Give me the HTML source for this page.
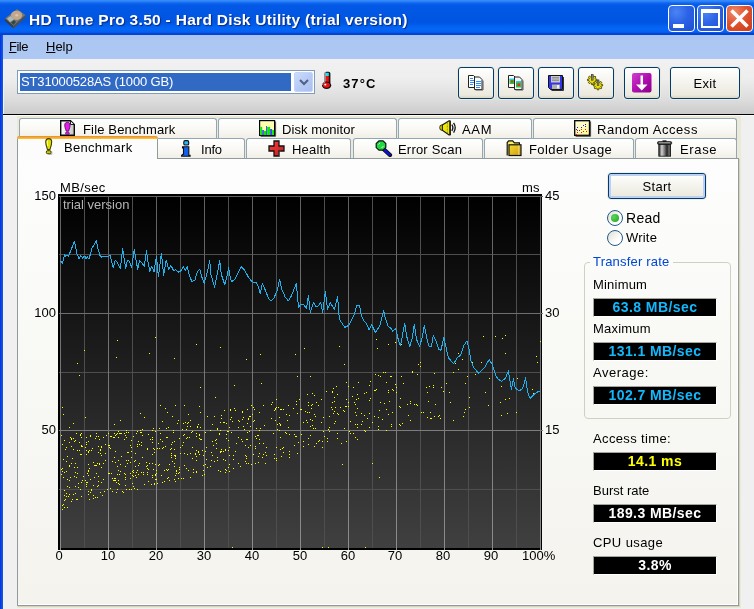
<!DOCTYPE html>
<html><head><meta charset="utf-8"><title>HD Tune Pro 3.50 - Hard Disk Utility (trial version)</title>
<style>
html,body{margin:0;padding:0;}
body{width:754px;height:609px;overflow:hidden;position:relative;background:#f0f0f0;font-family:"Liberation Sans",sans-serif;font-size:13px;color:#000;}
body *{position:absolute;box-sizing:border-box;}
svg *{position:static;}
u{position:static;}
.t{white-space:nowrap;line-height:16px;height:16px;will-change:transform;}
#title{left:0;top:0;width:754px;height:35px;background:linear-gradient(#3a8ffa 0,#2a80f6 1.500px,#0f66f0 3px,#0358e6 5.500px,#0054e2 22px,#0360f0 26px,#0566f6 29px,#0560f0 32px,#0346d6 33.500px,#0240c8 35px);}
#title .cap{will-change:transform;left:29px;top:10px;font-weight:bold;font-size:15.5px;color:#fff;line-height:20px;height:20px;white-space:nowrap;text-shadow:1px 1px 1px #0a2a80;letter-spacing:0.3px;}
.tb{top:5px;width:27px;height:27px;border:1px solid #fff;border-radius:4px;background:radial-gradient(circle at 30% 25%,#4a84f5 0,#2c63e6 45%,#1f4ed0 100%);}
.tb.close{background:radial-gradient(circle at 30% 25%,#f08a6a 0,#e0542f 45%,#c93a1a 100%);}
#lb{left:0;top:35px;width:3px;height:574px;background:linear-gradient(90deg,#0831d9 0,#0a4fe6 60%,#1659ea 100%);}
#lb2{left:3px;top:59px;width:1px;height:550px;background:#f6f3ea;}
#menu{left:3px;top:35px;width:751px;height:24px;background:linear-gradient(#a9c3f0 0,#adc7f3 30%,#aec8f4 100%);}
#menu .t{top:4px;}
#tool{left:4px;top:59px;width:750px;height:55px;background:linear-gradient(#f1f1f1 0,#eeeeee 35%,#dcdcdc 75%,#cbcbcb 100%);}
#toolline{left:3px;top:114px;width:751px;height:1px;background:#000;box-shadow:0 1px 0 #fafafa;}
#combo{left:17px;top:70px;width:298px;height:24px;background:#fff;border:1px solid #7f9db9;}
#combo .sel{left:2px;top:2px;width:271px;height:18px;background:#316ac5;color:#fff;}
#combo .sel .t{left:1px;top:1px;letter-spacing:-0.14px;}
#combo .dd{left:276px;top:1px;width:19px;height:20px;border-radius:2px;background:linear-gradient(135deg,#cddcfb 0,#b8cbf6 50%,#a9bff2 100%);border:1px solid #c3d3fa;}
.btn{border:1px solid #003c74;border-radius:3px;background:linear-gradient(#ffffff 0,#f6f5f0 40%,#eceade 90%,#d9d6c6 100%);box-shadow:0 0 0 1px #ece9d8;}
.btn .t{width:100%;text-align:center;}
.btn svg{left:8px;top:6px;}
.tab{height:22px;border:1px solid #91a7b4;border-bottom:none;border-radius:3px 3px 0 0;background:linear-gradient(#ffffff 0,#f9f8f4 50%,#efede3 100%);}
.tab .t{top:3px;}
#tabbg{left:17px;top:116px;width:724px;height:492px;background:#ece9d8;}
#panel{left:17px;top:158px;width:722px;height:448px;border:1px solid #919b9c;background:linear-gradient(#fdfdfd 0,#f9f9f6 40%,#f4f3ee 100%);box-shadow:inset -1px -1px 0 #fff,1px 1px 0 #d6d2bc;}
#seltab{left:17px;top:136px;width:141px;height:23px;border:1px solid #919b9c;border-bottom:none;border-top:none;border-radius:3px 3px 0 0;background:#fcfcfc;}
#seltab .or{left:-1px;top:0;width:141px;height:3px;background:linear-gradient(#e68b2c,#ffc73c);border-radius:3px 3px 0 0;}
.chart{left:0;top:0;}
.box{left:593px;width:124px;height:19px;background:#000;border-top:1px solid #a5a59a;border-left:1px solid #a5a59a;border-right:1px solid #fff;border-bottom:1px solid #fff;}
.box .t{left:0;top:0px;width:100%;text-align:center;font-weight:bold;font-size:14px;line-height:16px;letter-spacing:0.42px;}
.cy{color:#12b8fc;}.ye{color:#ffff00;}.wh{color:#fff;}
#grp{left:584px;top:262px;width:147px;height:157px;border:1px solid #d0d0bf;border-radius:4px;}
.radio{width:16px;height:16px;border-radius:50%;border:1px solid #21598c;background:linear-gradient(135deg,#dcdcd4 0,#f0f0ea 35%,#fff 70%);}
.xl{top:548px;width:40px;text-align:center;}
</style></head><body>
<div id="title">
  <svg style="left:4px;top:8px" width="24" height="22" viewBox="0 0 24 22"><polygon points="1,10.5 13,1 21.5,7 9.5,18" fill="#77756e"/><polygon points="1,10.5 9.5,18 9.5,20.5 1,13" fill="#3c3c3a"/><polygon points="9.5,18 21.5,7 21.5,9.5 9.5,20.5" fill="#505049"/><ellipse cx="12.6" cy="7.3" rx="5.6" ry="4.6" fill="#c2a78d"/><ellipse cx="12.8" cy="7.2" rx="1.6" ry="1.3" fill="#d8c4b0"/><polygon points="3,10.5 6.5,8 10,11.5 6,14" fill="#aab8b8"/><polygon points="7,14.5 10,12 12,14 9.5,17" fill="#2f4a46"/></svg>
  <div class="cap">HD Tune Pro 3.50 - Hard Disk Utility (trial version)</div>
  <div class="tb" style="left:668px"><div style="left:4px;top:18px;width:11px;height:4px;background:#fff"></div></div>
  <div class="tb" style="left:697px"><div style="left:3px;top:3px;width:19px;height:19px;border:2px solid #fff;border-top-width:4px"></div></div>
  <div class="tb close" style="left:726px"><svg style="left:2px;top:2px" width="21" height="21" viewBox="0 0 21 21"><path d="M2.5 2.5 L18.5 18.5 M18.5 2.5 L2.5 18.5" stroke="#fff" stroke-width="3.6"/></svg></div>
</div>
<div id="lb"></div><div id="lb2"></div>
<div id="menu"><div class="t" style="left:6px;letter-spacing:-0.5px"><u>F</u>ile</div><div class="t" style="left:43px"><u>H</u>elp</div></div>
<div id="tool"></div><div id="toolline"></div>
<div id="combo"><div class="sel"><div class="t">ST31000528AS (1000 GB)</div></div><div class="dd"><svg style="left:4px;top:6px" width="10" height="7" viewBox="0 0 10 7"><path d="M1 1 L5 5 L9 1" fill="none" stroke="#4d6185" stroke-width="2"/></svg></div></div>
<svg style="left:321px;top:71px" width="12" height="19" viewBox="0 0 12 19"><rect x="3.600" y="0.800" width="5.800" height="13" rx="1.800" fill="#111"/><rect x="3.600" y="1.200" width="1.400" height="11" fill="#9a9a9a"/><rect x="4.800" y="1.800" width="3" height="3.200" fill="#20e0f0"/><rect x="4.800" y="5" width="3" height="9" fill="#f01010"/><ellipse cx="5.600" cy="14.300" rx="4.600" ry="3.700" fill="#111"/><path d="M1.200 14 a4.400 3.500 0 0 1 3 -3" stroke="#9a9a9a" stroke-width="1" fill="none"/><ellipse cx="5.400" cy="14.100" rx="3.500" ry="2.700" fill="#f01010"/><rect x="3.400" y="12.800" width="1.800" height="1.600" fill="#fff"/></svg>
<div class="t" style="left:343px;top:76px;font-weight:bold;font-size:13px;letter-spacing:1.1px">37°C</div>

<div class="btn" style="left:458px;top:67px;width:36px;height:32px"><svg width="18" height="18" viewBox="0 0 18 18"><path d="M1.500 1.500 h5 l2 2 v10 h-7z" fill="#fff" stroke="#222" stroke-width="1"/><path d="M3 4.500h3M3 6.500h4M3 8.500h4M3 10.500h3" stroke="#2a8cff" stroke-width="1"/><path d="M7.500 3 h5 l2.500 2.500 v10 h-7.500z" fill="#fff" stroke="#222" stroke-width="1"/><path d="M9 7.500h5M9 9.500h5M9 11.500h5M9 13.500h4" stroke="#2a8cff" stroke-width="1"/><path d="M16 6.500v9.500h-7.500" stroke="#555" fill="none"/></svg></div>
<div class="btn" style="left:498px;top:67px;width:36px;height:32px"><svg width="18" height="18" viewBox="0 0 18 18"><path d="M1.500 1.500 h5 l2 2 v10 h-7z" fill="#fff" stroke="#222"/><rect x="2.500" y="5" width="4.500" height="5" fill="#30c040"/><rect x="2.500" y="4.500" width="4.500" height="1.500" fill="#30c8e8"/><rect x="4" y="6.500" width="2" height="2" fill="#e03020"/><path d="M7.500 3 h5 l2.500 2.500 v10 h-7.500z" fill="#f4f4f4" stroke="#222"/><rect x="9" y="7.500" width="5" height="6" fill="#30c040"/><rect x="9" y="7" width="5" height="1.500" fill="#30c8e8"/><rect x="10.500" y="9.500" width="2.500" height="2.500" fill="#e03020"/><path d="M16 6.500v9.500h-7.500" stroke="#555" fill="none"/></svg></div>
<div class="btn" style="left:538px;top:67px;width:36px;height:32px"><svg width="18" height="18" viewBox="0 0 18 18"><path d="M1.500 1.500 h14 v14 h-12 l-2 -2z" fill="#3434e8" stroke="#111"/><rect x="4" y="2" width="9" height="6.500" fill="#c8c8c8"/><path d="M5 3.500h7M5 5h7M5 6.500h7" stroke="#888" stroke-width="0.800"/><rect x="5" y="10.500" width="8" height="4.500" fill="#b0b0b0"/><rect x="10" y="11" width="2" height="3.500" fill="#eee"/><path d="M16.500 3v13.500h-12" stroke="#333" fill="none"/></svg></div>
<div class="btn" style="left:578px;top:67px;width:36px;height:32px"><svg width="18" height="18" viewBox="0 0 18 18"><path d="M9.83 5.09 L9.83 6.71 L8.41 6.67 L8.01 7.62 L9.05 8.60 L7.90 9.75 L6.92 8.71 L5.97 9.11 L6.01 10.53 L4.39 10.53 L4.43 9.11 L3.48 8.71 L2.50 9.75 L1.35 8.60 L2.39 7.62 L1.99 6.67 L0.57 6.71 L0.57 5.09 L1.99 5.13 L2.39 4.18 L1.35 3.20 L2.50 2.05 L3.48 3.09 L4.43 2.69 L4.39 1.27 L6.01 1.27 L5.97 2.69 L6.92 3.09 L7.90 2.05 L9.05 3.20 L8.01 4.18 L8.41 5.13z" fill="#e8e000" stroke="#4a4500" stroke-width="0.9"/><path d="M15.63 10.39 L15.63 12.01 L14.21 11.97 L13.81 12.92 L14.85 13.90 L13.70 15.05 L12.72 14.01 L11.77 14.41 L11.81 15.83 L10.19 15.83 L10.23 14.41 L9.28 14.01 L8.30 15.05 L7.15 13.90 L8.19 12.92 L7.79 11.97 L6.37 12.01 L6.37 10.39 L7.79 10.43 L8.19 9.48 L7.15 8.50 L8.30 7.35 L9.28 8.39 L10.23 7.99 L10.19 6.57 L11.81 6.57 L11.77 7.99 L12.72 8.39 L13.70 7.35 L14.85 8.50 L13.81 9.48 L14.21 10.43z" fill="#e8e000" stroke="#4a4500" stroke-width="0.9"/><rect x="4.400" y="0.600" width="1.700" height="5.600" fill="#909090" stroke="#303030" stroke-width="0.600"/><rect x="10.200" y="5.900" width="1.700" height="5.600" fill="#909090" stroke="#303030" stroke-width="0.600"/></svg></div>
<div class="btn" style="left:624px;top:67px;width:36px;height:32px"><svg style="left:7px;top:5px" width="20" height="20" viewBox="0 0 20 20"><defs><linearGradient id="pg" x1="0" y1="0" x2="1" y2="1"><stop offset="0" stop-color="#d040d0"/><stop offset="0.500" stop-color="#b010b0"/><stop offset="1" stop-color="#8a008a"/></linearGradient></defs><rect x="0" y="0" width="19.500" height="19.500" rx="2" fill="url(#pg)"/><path d="M8.500 2.500 h2.500 v9 h4.500 l-5.750 6 l-5.750 -6 h4.500z" fill="#fff"/></svg></div>
<div class="btn" style="left:670px;top:67px;width:70px;height:32px"><div class="t" style="top:8px;letter-spacing:0.3px">Exit</div></div>

<div id="tabbg"></div>
<!-- top row tabs -->
<div class="tab" style="left:19px;top:118px;width:198px"><div class="t" style="left:62.500px;letter-spacing:0.15px">File Benchmark</div>
 <svg style="left:40px;top:1px" width="16" height="17" viewBox="0 0 16 17"><defs><linearGradient id="dg" x1="0" y1="0" x2="1" y2="0"><stop offset="0" stop-color="#fff"/><stop offset="1" stop-color="#c4c4c4"/></linearGradient></defs><path d="M0.700 0.700 h9.800 l3.800 3.800 v10.800 h-13.600z" fill="url(#dg)" stroke="#0a0a0a" stroke-width="1.400"/><path d="M10.500 0.700 v3.800 h3.800z" fill="#fff" stroke="#0a0a0a" stroke-width="0.900"/><path d="M7.4 2.3 C10.87 2.3 10.54 6.30 8.5 11.2 L6.300000000000001 11.2 C4.26 6.30 3.93 2.3 7.4 2.3z" fill="#e818e8" stroke="#5a0a60" stroke-width="0.900"/><rect x="5.500" y="12.300" width="3.800" height="2.100" rx="0.900" fill="#e818e8" stroke="#5a0a60" stroke-width="0.700"/></svg></div>
<div class="tab" style="left:218px;top:118px;width:179px"><div class="t" style="left:63px;letter-spacing:0.05px">Disk monitor</div>
 <svg style="left:40px;top:1px" width="18" height="17" viewBox="0 0 18 17"><rect x="0.600" y="0.600" width="15" height="14.800" fill="#ffffb0" stroke="#000" stroke-width="1.200"/><rect x="1.200" y="7" width="2" height="8" fill="#00f000"/><rect x="3.200" y="10" width="1.700" height="5" fill="#4040ff"/><rect x="4.900" y="11" width="2.200" height="4" fill="#00f000"/><rect x="7.100" y="6" width="1" height="9" fill="#4040ff"/><rect x="8.100" y="7" width="3" height="8" fill="#00f000"/><rect x="11.100" y="9" width="2" height="6" fill="#4040ff"/><rect x="13.100" y="10" width="2" height="5" fill="#00f000"/><path d="M16.600 1.500v14.800h-15" stroke="#444" fill="none" stroke-width="1"/></svg></div>
<div class="tab" style="left:398px;top:118px;width:134px"><div class="t" style="left:63px;letter-spacing:0.7px">AAM</div>
 <svg style="left:40px;top:1px" width="18" height="17" viewBox="0 0 18 17"><ellipse cx="2.400" cy="7.600" rx="1.600" ry="2.600" fill="#f0e800" stroke="#111" stroke-width="0.900"/><path d="M3.300 5 L10 0.800 L11 0.800 L11 15 L10 15 L3.300 10.200z" fill="#f0e800" stroke="#111" stroke-width="1.100"/><path d="M11.200 1 V15" stroke="#111" stroke-width="1.200"/><path d="M8.300 2.500v11" stroke="#555" stroke-width="0.600" stroke-dasharray="2 1"/><path d="M12.800 4.600 q2.200 3.100 0 6.200 M14.600 2.800 q3.200 4.900 0 9.800" fill="none" stroke="#111" stroke-width="1.300"/></svg></div>
<div class="tab" style="left:533px;top:118px;width:204px"><div class="t" style="left:62.700px;letter-spacing:0.54px">Random Access</div>
 <svg style="left:40px;top:1px" width="18" height="17" viewBox="0 0 18 17"><defs><linearGradient id="rg" x1="0" y1="0" x2="1" y2="1"><stop offset="0" stop-color="#ffffd8"/><stop offset="1" stop-color="#fff890"/></linearGradient></defs><rect x="0.700" y="0.700" width="14.800" height="14.600" fill="url(#rg)" stroke="#000" stroke-width="1.300"/><g fill="#1818ff"><rect x="3" y="7" width="1" height="1"/><rect x="2" y="9" width="1" height="1"/><rect x="5" y="10" width="1" height="1"/><rect x="7" y="7" width="1" height="1"/><rect x="9" y="5" width="1" height="1"/><rect x="11" y="4" width="1" height="1"/><rect x="11" y="6" width="1" height="1"/></g><g fill="#ff1010"><rect x="3" y="10" width="1" height="1"/><rect x="3" y="12" width="1" height="1"/><rect x="2" y="14" width="1" height="1"/><rect x="7" y="9" width="1" height="1"/><rect x="7" y="12" width="1" height="1"/><rect x="9" y="11" width="1" height="1"/><rect x="11" y="9" width="1" height="1"/><rect x="12" y="11" width="1" height="1"/></g><path d="M16.600 1.500v14.800h-15" stroke="#444" fill="none" stroke-width="1"/></svg></div>
<!-- bottom row tabs -->
<div class="tab" style="left:154px;top:138px;width:91px"><div class="t" style="left:46px;letter-spacing:-0.2px">Info</div>
 <svg style="left:26px;top:1px" width="12" height="17" viewBox="0 0 12 17"><rect x="2.800" y="0.600" width="4.900" height="4.400" rx="1.300" fill="#28b8f8" stroke="#111" stroke-width="1.100"/><path d="M1.500 6.700 h6.300 v8.500 h1.300 v1.100 h-8.500 v-1.100 l1.900 -1.100 v-6.200 h-1z" fill="#1060f0" stroke="#111" stroke-width="1.100"/></svg></div>
<div class="tab" style="left:246px;top:138px;width:105px"><div class="t" style="left:44.500px;letter-spacing:0.2px">Health</div>
 <svg style="left:21px;top:1px" width="18" height="17" viewBox="0 0 18 17"><defs><linearGradient id="hg" x1="0" y1="0" x2="1" y2="1"><stop offset="0" stop-color="#f04040"/><stop offset="1" stop-color="#d01818"/></linearGradient></defs><path d="M6 1 h5 v5 h5 v5 h-5 v5 h-5 v-5 h-5 v-5 h5z" fill="url(#hg)" stroke="#111" stroke-width="1.300"/><path d="M12 7v5h-1v5" stroke="#555" fill="none" stroke-width="0.600"/></svg></div>
<div class="tab" style="left:353px;top:138px;width:130px"><div class="t" style="left:43.500px;letter-spacing:0.2px">Error Scan</div>
 <svg style="left:21px;top:1px" width="18" height="17" viewBox="0 0 18 17"><path d="M9 9.500 L15 15" stroke="#111" stroke-width="4.200" stroke-linecap="round"/><path d="M9.500 10 L14.800 14.800" stroke="#1010d0" stroke-width="2.400" stroke-linecap="round"/><polygon points="4,0.800 8,0.800 10.800,3.600 10.800,7.600 8,10.200 4,10.200 1.200,7.600 1.200,3.600" fill="#20d840" stroke="#111" stroke-width="1.200"/><path d="M3.500 4.500 l1.500 -1.500 M6.500 8 l2 -2" stroke="#d8ffd8" stroke-width="0.900"/></svg></div>
<div class="tab" style="left:484px;top:138px;width:150px"><div class="t" style="left:43.600px;letter-spacing:0.43px">Folder Usage</div>
 <svg style="left:21px;top:1px" width="17" height="17" viewBox="0 0 17 17"><defs><linearGradient id="fg" x1="0" y1="0" x2="1" y2="1"><stop offset="0" stop-color="#f4dc30"/><stop offset="1" stop-color="#d09c10"/></linearGradient></defs><path d="M1.200 15.500 v-13 l1.500 -1.700 h4 l1.700 2 h5 v2" fill="#f8ec60" stroke="#111" stroke-width="1.200"/><rect x="3" y="4.800" width="12" height="10.700" fill="url(#fg)" stroke="#111" stroke-width="1.200"/><path d="M12.700 5.500v9.500" stroke="#e8e0b0" stroke-width="0.700"/></svg></div>
<div class="tab" style="left:635px;top:138px;width:102px"><div class="t" style="left:43.800px;letter-spacing:0.65px">Erase</div>
 <svg style="left:21px;top:1px" width="16" height="17" viewBox="0 0 16 17"><defs><linearGradient id="tg" x1="0" y1="0" x2="1" y2="0"><stop offset="0" stop-color="#222"/><stop offset="0.250" stop-color="#d0d0d0"/><stop offset="0.450" stop-color="#888"/><stop offset="0.700" stop-color="#222"/><stop offset="0.880" stop-color="#777"/><stop offset="1" stop-color="#111"/></linearGradient></defs><rect x="5.500" y="0.300" width="4" height="1.800" fill="#222"/><rect x="1.800" y="4" width="11.800" height="12.200" fill="url(#tg)" stroke="#111" stroke-width="0.800"/><rect x="0.600" y="1.700" width="14" height="2.600" rx="0.800" fill="#555" stroke="#111" stroke-width="0.900"/><rect x="2" y="2.300" width="11" height="0.900" fill="#aaa"/></svg></div>
<div id="panel"></div>
<div id="seltab"><div class="or"></div><div class="t" style="left:46px;top:4px;letter-spacing:0.3px">Benchmark</div>
 <svg style="left:27px;top:2px" width="9" height="17" viewBox="0 0 9 17"><path d="M3.7 0.6 C7.67 0.6 7.28 5.55 4.9 11.6 L2.5 11.6 C0.12 5.55 -0.27 0.6 3.7 0.6z" fill="#dede00" stroke="#3c3c00" stroke-width="1.100"/><path d="M2.600 2.500 q-0.800 2.500 0.300 5.500" stroke="#fafa90" stroke-width="1.100" fill="none"/><rect x="1.300" y="12.700" width="4.800" height="3" rx="1.300" fill="#cccc00" stroke="#3c3c00" stroke-width="1"/><path d="M6.800 13.500 v2.800 h-3.500" stroke="#8a8a7a" stroke-width="0.700" fill="none"/></svg></div>

<svg class="chart" width="754" height="609" viewBox="0 0 754 609">
<defs><linearGradient id="cg" x1="0" y1="0" x2="0" y2="1"><stop offset="0" stop-color="#000"/><stop offset="1" stop-color="#404040"/></linearGradient>
<linearGradient id="mg" gradientUnits="userSpaceOnUse" x1="0" y1="196" x2="0" y2="548"><stop offset="0" stop-color="#606060"/><stop offset="1" stop-color="#8c8c8c"/></linearGradient></defs>
<rect x="58" y="194" width="484" height="356" fill="#000"/>
<rect x="60" y="196" width="481" height="352" fill="url(#cg)"/>
<g fill="#4e4e4e"><rect x="84" y="196" width="1" height="352"/><rect x="132" y="196" width="1" height="352"/><rect x="180" y="196" width="1" height="352"/><rect x="228" y="196" width="1" height="352"/><rect x="276" y="196" width="1" height="352"/><rect x="324" y="196" width="1" height="352"/><rect x="372" y="196" width="1" height="352"/><rect x="420" y="196" width="1" height="352"/><rect x="468" y="196" width="1" height="352"/><rect x="516" y="196" width="1" height="352"/><rect x="59" y="254" width="482" height="1"/><rect x="59" y="372" width="482" height="1"/><rect x="59" y="489" width="482" height="1"/></g>
<g fill="url(#mg)"><rect x="60" y="196" width="1" height="354"/><rect x="108" y="196" width="1" height="354"/><rect x="156" y="196" width="1" height="354"/><rect x="204" y="196" width="1" height="354"/><rect x="252" y="196" width="1" height="354"/><rect x="300" y="196" width="1" height="354"/><rect x="348" y="196" width="1" height="354"/><rect x="396" y="196" width="1" height="354"/><rect x="444" y="196" width="1" height="354"/><rect x="492" y="196" width="1" height="354"/><rect x="540" y="196" width="1" height="354"/></g>
<rect x="59" y="196" width="484" height="1" fill="#606060"/><rect x="59" y="313" width="484" height="1" fill="#6f6f6f"/><rect x="59" y="430" width="484" height="1" fill="#7d7d7d"/>
<g fill="#ffff00" shape-rendering="crispEdges"><rect x="68" y="496" width="1" height="1"/><rect x="62" y="468" width="1" height="1"/><rect x="62" y="471" width="1" height="1"/><rect x="71" y="501" width="1" height="1"/><rect x="71" y="446" width="1" height="1"/><rect x="66" y="461" width="1" height="1"/><rect x="74" y="476" width="1" height="1"/><rect x="62" y="444" width="1" height="1"/><rect x="64" y="500" width="1" height="1"/><rect x="80" y="489" width="1" height="1"/><rect x="76" y="477" width="1" height="1"/><rect x="62" y="505" width="1" height="1"/><rect x="77" y="473" width="1" height="1"/><rect x="75" y="472" width="1" height="1"/><rect x="80" y="454" width="1" height="1"/><rect x="74" y="467" width="1" height="1"/><rect x="78" y="483" width="1" height="1"/><rect x="63" y="477" width="1" height="1"/><rect x="64" y="472" width="1" height="1"/><rect x="77" y="450" width="1" height="1"/><rect x="82" y="480" width="1" height="1"/><rect x="75" y="463" width="1" height="1"/><rect x="81" y="437" width="1" height="1"/><rect x="76" y="499" width="1" height="1"/><rect x="76" y="433" width="1" height="1"/><rect x="67" y="479" width="1" height="1"/><rect x="61" y="474" width="1" height="1"/><rect x="63" y="504" width="1" height="1"/><rect x="64" y="490" width="1" height="1"/><rect x="81" y="496" width="1" height="1"/><rect x="74" y="441" width="1" height="1"/><rect x="81" y="482" width="1" height="1"/><rect x="69" y="442" width="1" height="1"/><rect x="64" y="495" width="1" height="1"/><rect x="66" y="471" width="1" height="1"/><rect x="67" y="507" width="1" height="1"/><rect x="69" y="465" width="1" height="1"/><rect x="77" y="467" width="1" height="1"/><rect x="77" y="499" width="1" height="1"/><rect x="79" y="442" width="1" height="1"/><rect x="70" y="477" width="1" height="1"/><rect x="76" y="499" width="1" height="1"/><rect x="66" y="496" width="1" height="1"/><rect x="62" y="509" width="1" height="1"/><rect x="63" y="414" width="1" height="1"/><rect x="75" y="493" width="1" height="1"/><rect x="69" y="480" width="1" height="1"/><rect x="81" y="433" width="1" height="1"/><rect x="72" y="499" width="1" height="1"/><rect x="69" y="487" width="1" height="1"/><rect x="64" y="507" width="1" height="1"/><rect x="73" y="494" width="1" height="1"/><rect x="61" y="469" width="1" height="1"/><rect x="81" y="454" width="1" height="1"/><rect x="69" y="494" width="1" height="1"/><rect x="73" y="449" width="1" height="1"/><rect x="66" y="447" width="1" height="1"/><rect x="81" y="446" width="1" height="1"/><rect x="78" y="487" width="1" height="1"/><rect x="69" y="427" width="1" height="1"/><rect x="67" y="456" width="1" height="1"/><rect x="71" y="438" width="1" height="1"/><rect x="83" y="476" width="1" height="1"/><rect x="66" y="493" width="1" height="1"/><rect x="75" y="440" width="1" height="1"/><rect x="72" y="458" width="1" height="1"/><rect x="63" y="459" width="1" height="1"/><rect x="79" y="450" width="1" height="1"/><rect x="65" y="449" width="1" height="1"/><rect x="80" y="435" width="1" height="1"/><rect x="70" y="437" width="1" height="1"/><rect x="65" y="499" width="1" height="1"/><rect x="82" y="446" width="1" height="1"/><rect x="80" y="434" width="1" height="1"/><rect x="69" y="466" width="1" height="1"/><rect x="61" y="435" width="1" height="1"/><rect x="73" y="438" width="1" height="1"/><rect x="81" y="445" width="1" height="1"/><rect x="67" y="486" width="1" height="1"/><rect x="75" y="486" width="1" height="1"/><rect x="64" y="440" width="1" height="1"/><rect x="71" y="463" width="1" height="1"/><rect x="71" y="439" width="1" height="1"/><rect x="73" y="423" width="1" height="1"/><rect x="89" y="499" width="1" height="1"/><rect x="89" y="468" width="1" height="1"/><rect x="98" y="476" width="1" height="1"/><rect x="98" y="446" width="1" height="1"/><rect x="98" y="481" width="1" height="1"/><rect x="103" y="463" width="1" height="1"/><rect x="103" y="437" width="1" height="1"/><rect x="99" y="464" width="1" height="1"/><rect x="101" y="467" width="1" height="1"/><rect x="96" y="436" width="1" height="1"/><rect x="106" y="435" width="1" height="1"/><rect x="98" y="436" width="1" height="1"/><rect x="88" y="491" width="1" height="1"/><rect x="86" y="484" width="1" height="1"/><rect x="101" y="446" width="1" height="1"/><rect x="88" y="452" width="1" height="1"/><rect x="88" y="441" width="1" height="1"/><rect x="90" y="436" width="1" height="1"/><rect x="96" y="433" width="1" height="1"/><rect x="88" y="471" width="1" height="1"/><rect x="93" y="485" width="1" height="1"/><rect x="102" y="495" width="1" height="1"/><rect x="95" y="497" width="1" height="1"/><rect x="99" y="464" width="1" height="1"/><rect x="108" y="445" width="1" height="1"/><rect x="87" y="482" width="1" height="1"/><rect x="103" y="479" width="1" height="1"/><rect x="95" y="438" width="1" height="1"/><rect x="91" y="489" width="1" height="1"/><rect x="98" y="452" width="1" height="1"/><rect x="86" y="454" width="1" height="1"/><rect x="86" y="437" width="1" height="1"/><rect x="104" y="491" width="1" height="1"/><rect x="86" y="442" width="1" height="1"/><rect x="93" y="462" width="1" height="1"/><rect x="91" y="490" width="1" height="1"/><rect x="90" y="492" width="1" height="1"/><rect x="86" y="486" width="1" height="1"/><rect x="92" y="448" width="1" height="1"/><rect x="97" y="486" width="1" height="1"/><rect x="85" y="417" width="1" height="1"/><rect x="98" y="485" width="1" height="1"/><rect x="107" y="489" width="1" height="1"/><rect x="95" y="465" width="1" height="1"/><rect x="94" y="465" width="1" height="1"/><rect x="108" y="473" width="1" height="1"/><rect x="101" y="455" width="1" height="1"/><rect x="93" y="495" width="1" height="1"/><rect x="86" y="450" width="1" height="1"/><rect x="88" y="494" width="1" height="1"/><rect x="105" y="453" width="1" height="1"/><rect x="90" y="479" width="1" height="1"/><rect x="88" y="470" width="1" height="1"/><rect x="108" y="433" width="1" height="1"/><rect x="90" y="435" width="1" height="1"/><rect x="93" y="498" width="1" height="1"/><rect x="96" y="465" width="1" height="1"/><rect x="97" y="497" width="1" height="1"/><rect x="87" y="473" width="1" height="1"/><rect x="85" y="480" width="1" height="1"/><rect x="99" y="463" width="1" height="1"/><rect x="100" y="450" width="1" height="1"/><rect x="94" y="477" width="1" height="1"/><rect x="88" y="451" width="1" height="1"/><rect x="86" y="444" width="1" height="1"/><rect x="100" y="449" width="1" height="1"/><rect x="88" y="464" width="1" height="1"/><rect x="105" y="444" width="1" height="1"/><rect x="99" y="439" width="1" height="1"/><rect x="101" y="482" width="1" height="1"/><rect x="88" y="475" width="1" height="1"/><rect x="105" y="460" width="1" height="1"/><rect x="100" y="453" width="1" height="1"/><rect x="85" y="447" width="1" height="1"/><rect x="97" y="463" width="1" height="1"/><rect x="86" y="450" width="1" height="1"/><rect x="86" y="482" width="1" height="1"/><rect x="89" y="450" width="1" height="1"/><rect x="96" y="473" width="1" height="1"/><rect x="101" y="447" width="1" height="1"/><rect x="100" y="492" width="1" height="1"/><rect x="91" y="450" width="1" height="1"/><rect x="122" y="491" width="1" height="1"/><rect x="115" y="451" width="1" height="1"/><rect x="125" y="474" width="1" height="1"/><rect x="120" y="464" width="1" height="1"/><rect x="130" y="478" width="1" height="1"/><rect x="131" y="489" width="1" height="1"/><rect x="128" y="432" width="1" height="1"/><rect x="115" y="480" width="1" height="1"/><rect x="114" y="457" width="1" height="1"/><rect x="121" y="433" width="1" height="1"/><rect x="128" y="460" width="1" height="1"/><rect x="125" y="477" width="1" height="1"/><rect x="120" y="420" width="1" height="1"/><rect x="119" y="474" width="1" height="1"/><rect x="117" y="474" width="1" height="1"/><rect x="109" y="447" width="1" height="1"/><rect x="111" y="436" width="1" height="1"/><rect x="130" y="473" width="1" height="1"/><rect x="118" y="431" width="1" height="1"/><rect x="117" y="466" width="1" height="1"/><rect x="110" y="488" width="1" height="1"/><rect x="115" y="435" width="1" height="1"/><rect x="115" y="462" width="1" height="1"/><rect x="117" y="433" width="1" height="1"/><rect x="128" y="452" width="1" height="1"/><rect x="131" y="457" width="1" height="1"/><rect x="110" y="448" width="1" height="1"/><rect x="127" y="452" width="1" height="1"/><rect x="110" y="436" width="1" height="1"/><rect x="120" y="471" width="1" height="1"/><rect x="126" y="432" width="1" height="1"/><rect x="124" y="473" width="1" height="1"/><rect x="118" y="483" width="1" height="1"/><rect x="113" y="437" width="1" height="1"/><rect x="114" y="437" width="1" height="1"/><rect x="119" y="484" width="1" height="1"/><rect x="111" y="473" width="1" height="1"/><rect x="114" y="478" width="1" height="1"/><rect x="130" y="445" width="1" height="1"/><rect x="118" y="460" width="1" height="1"/><rect x="117" y="489" width="1" height="1"/><rect x="132" y="483" width="1" height="1"/><rect x="124" y="439" width="1" height="1"/><rect x="115" y="478" width="1" height="1"/><rect x="119" y="433" width="1" height="1"/><rect x="129" y="489" width="1" height="1"/><rect x="126" y="437" width="1" height="1"/><rect x="123" y="492" width="1" height="1"/><rect x="131" y="440" width="1" height="1"/><rect x="132" y="475" width="1" height="1"/><rect x="112" y="461" width="1" height="1"/><rect x="131" y="447" width="1" height="1"/><rect x="127" y="463" width="1" height="1"/><rect x="109" y="445" width="1" height="1"/><rect x="131" y="451" width="1" height="1"/><rect x="112" y="478" width="1" height="1"/><rect x="125" y="485" width="1" height="1"/><rect x="121" y="456" width="1" height="1"/><rect x="114" y="424" width="1" height="1"/><rect x="120" y="433" width="1" height="1"/><rect x="130" y="462" width="1" height="1"/><rect x="114" y="433" width="1" height="1"/><rect x="116" y="492" width="1" height="1"/><rect x="125" y="466" width="1" height="1"/><rect x="125" y="435" width="1" height="1"/><rect x="109" y="473" width="1" height="1"/><rect x="125" y="479" width="1" height="1"/><rect x="126" y="460" width="1" height="1"/><rect x="132" y="471" width="1" height="1"/><rect x="114" y="480" width="1" height="1"/><rect x="116" y="434" width="1" height="1"/><rect x="113" y="480" width="1" height="1"/><rect x="124" y="433" width="1" height="1"/><rect x="118" y="480" width="1" height="1"/><rect x="112" y="491" width="1" height="1"/><rect x="118" y="437" width="1" height="1"/><rect x="126" y="430" width="1" height="1"/><rect x="116" y="482" width="1" height="1"/><rect x="126" y="489" width="1" height="1"/><rect x="118" y="470" width="1" height="1"/><rect x="137" y="489" width="1" height="1"/><rect x="141" y="432" width="1" height="1"/><rect x="156" y="473" width="1" height="1"/><rect x="152" y="439" width="1" height="1"/><rect x="134" y="461" width="1" height="1"/><rect x="155" y="474" width="1" height="1"/><rect x="154" y="484" width="1" height="1"/><rect x="152" y="442" width="1" height="1"/><rect x="133" y="486" width="1" height="1"/><rect x="139" y="444" width="1" height="1"/><rect x="141" y="472" width="1" height="1"/><rect x="147" y="472" width="1" height="1"/><rect x="140" y="413" width="1" height="1"/><rect x="154" y="449" width="1" height="1"/><rect x="133" y="476" width="1" height="1"/><rect x="155" y="431" width="1" height="1"/><rect x="139" y="463" width="1" height="1"/><rect x="155" y="475" width="1" height="1"/><rect x="150" y="439" width="1" height="1"/><rect x="147" y="468" width="1" height="1"/><rect x="141" y="442" width="1" height="1"/><rect x="137" y="444" width="1" height="1"/><rect x="134" y="488" width="1" height="1"/><rect x="140" y="430" width="1" height="1"/><rect x="156" y="470" width="1" height="1"/><rect x="135" y="460" width="1" height="1"/><rect x="143" y="474" width="1" height="1"/><rect x="147" y="448" width="1" height="1"/><rect x="153" y="448" width="1" height="1"/><rect x="153" y="469" width="1" height="1"/><rect x="141" y="445" width="1" height="1"/><rect x="138" y="474" width="1" height="1"/><rect x="154" y="452" width="1" height="1"/><rect x="142" y="429" width="1" height="1"/><rect x="138" y="441" width="1" height="1"/><rect x="156" y="479" width="1" height="1"/><rect x="152" y="437" width="1" height="1"/><rect x="133" y="472" width="1" height="1"/><rect x="137" y="431" width="1" height="1"/><rect x="155" y="464" width="1" height="1"/><rect x="143" y="472" width="1" height="1"/><rect x="155" y="479" width="1" height="1"/><rect x="147" y="474" width="1" height="1"/><rect x="136" y="477" width="1" height="1"/><rect x="147" y="449" width="1" height="1"/><rect x="133" y="470" width="1" height="1"/><rect x="137" y="470" width="1" height="1"/><rect x="152" y="454" width="1" height="1"/><rect x="135" y="466" width="1" height="1"/><rect x="148" y="481" width="1" height="1"/><rect x="149" y="463" width="1" height="1"/><rect x="140" y="432" width="1" height="1"/><rect x="146" y="466" width="1" height="1"/><rect x="153" y="428" width="1" height="1"/><rect x="137" y="446" width="1" height="1"/><rect x="133" y="436" width="1" height="1"/><rect x="152" y="463" width="1" height="1"/><rect x="144" y="417" width="1" height="1"/><rect x="148" y="434" width="1" height="1"/><rect x="147" y="465" width="1" height="1"/><rect x="136" y="472" width="1" height="1"/><rect x="155" y="479" width="1" height="1"/><rect x="152" y="430" width="1" height="1"/><rect x="136" y="433" width="1" height="1"/><rect x="144" y="484" width="1" height="1"/><rect x="142" y="435" width="1" height="1"/><rect x="152" y="477" width="1" height="1"/><rect x="138" y="465" width="1" height="1"/><rect x="152" y="475" width="1" height="1"/><rect x="142" y="457" width="1" height="1"/><rect x="135" y="475" width="1" height="1"/><rect x="154" y="483" width="1" height="1"/><rect x="151" y="484" width="1" height="1"/><rect x="135" y="453" width="1" height="1"/><rect x="148" y="469" width="1" height="1"/><rect x="146" y="462" width="1" height="1"/><rect x="167" y="412" width="1" height="1"/><rect x="168" y="469" width="1" height="1"/><rect x="175" y="455" width="1" height="1"/><rect x="168" y="477" width="1" height="1"/><rect x="167" y="478" width="1" height="1"/><rect x="169" y="480" width="1" height="1"/><rect x="158" y="443" width="1" height="1"/><rect x="169" y="480" width="1" height="1"/><rect x="166" y="428" width="1" height="1"/><rect x="177" y="423" width="1" height="1"/><rect x="176" y="470" width="1" height="1"/><rect x="168" y="427" width="1" height="1"/><rect x="160" y="439" width="1" height="1"/><rect x="158" y="465" width="1" height="1"/><rect x="160" y="433" width="1" height="1"/><rect x="176" y="473" width="1" height="1"/><rect x="179" y="469" width="1" height="1"/><rect x="169" y="464" width="1" height="1"/><rect x="161" y="475" width="1" height="1"/><rect x="173" y="430" width="1" height="1"/><rect x="175" y="475" width="1" height="1"/><rect x="172" y="461" width="1" height="1"/><rect x="170" y="449" width="1" height="1"/><rect x="159" y="428" width="1" height="1"/><rect x="166" y="437" width="1" height="1"/><rect x="180" y="447" width="1" height="1"/><rect x="175" y="456" width="1" height="1"/><rect x="174" y="479" width="1" height="1"/><rect x="163" y="447" width="1" height="1"/><rect x="171" y="444" width="1" height="1"/><rect x="157" y="483" width="1" height="1"/><rect x="171" y="457" width="1" height="1"/><rect x="178" y="473" width="1" height="1"/><rect x="172" y="416" width="1" height="1"/><rect x="159" y="464" width="1" height="1"/><rect x="171" y="448" width="1" height="1"/><rect x="171" y="455" width="1" height="1"/><rect x="179" y="467" width="1" height="1"/><rect x="159" y="448" width="1" height="1"/><rect x="175" y="458" width="1" height="1"/><rect x="157" y="448" width="1" height="1"/><rect x="165" y="446" width="1" height="1"/><rect x="179" y="438" width="1" height="1"/><rect x="178" y="478" width="1" height="1"/><rect x="166" y="469" width="1" height="1"/><rect x="175" y="481" width="1" height="1"/><rect x="179" y="472" width="1" height="1"/><rect x="171" y="453" width="1" height="1"/><rect x="176" y="471" width="1" height="1"/><rect x="164" y="481" width="1" height="1"/><rect x="175" y="405" width="1" height="1"/><rect x="174" y="455" width="1" height="1"/><rect x="167" y="470" width="1" height="1"/><rect x="162" y="482" width="1" height="1"/><rect x="174" y="441" width="1" height="1"/><rect x="174" y="466" width="1" height="1"/><rect x="167" y="437" width="1" height="1"/><rect x="163" y="447" width="1" height="1"/><rect x="162" y="421" width="1" height="1"/><rect x="162" y="441" width="1" height="1"/><rect x="174" y="463" width="1" height="1"/><rect x="164" y="470" width="1" height="1"/><rect x="172" y="442" width="1" height="1"/><rect x="180" y="453" width="1" height="1"/><rect x="173" y="432" width="1" height="1"/><rect x="174" y="449" width="1" height="1"/><rect x="162" y="448" width="1" height="1"/><rect x="178" y="420" width="1" height="1"/><rect x="203" y="455" width="1" height="1"/><rect x="181" y="478" width="1" height="1"/><rect x="196" y="436" width="1" height="1"/><rect x="182" y="445" width="1" height="1"/><rect x="200" y="427" width="1" height="1"/><rect x="182" y="429" width="1" height="1"/><rect x="203" y="470" width="1" height="1"/><rect x="183" y="478" width="1" height="1"/><rect x="200" y="439" width="1" height="1"/><rect x="196" y="460" width="1" height="1"/><rect x="183" y="435" width="1" height="1"/><rect x="188" y="414" width="1" height="1"/><rect x="187" y="437" width="1" height="1"/><rect x="188" y="422" width="1" height="1"/><rect x="201" y="439" width="1" height="1"/><rect x="190" y="453" width="1" height="1"/><rect x="189" y="437" width="1" height="1"/><rect x="186" y="429" width="1" height="1"/><rect x="200" y="412" width="1" height="1"/><rect x="199" y="406" width="1" height="1"/><rect x="192" y="431" width="1" height="1"/><rect x="192" y="458" width="1" height="1"/><rect x="187" y="423" width="1" height="1"/><rect x="186" y="438" width="1" height="1"/><rect x="183" y="442" width="1" height="1"/><rect x="199" y="435" width="1" height="1"/><rect x="196" y="456" width="1" height="1"/><rect x="190" y="426" width="1" height="1"/><rect x="202" y="475" width="1" height="1"/><rect x="187" y="426" width="1" height="1"/><rect x="190" y="426" width="1" height="1"/><rect x="192" y="447" width="1" height="1"/><rect x="199" y="438" width="1" height="1"/><rect x="188" y="470" width="1" height="1"/><rect x="196" y="433" width="1" height="1"/><rect x="191" y="432" width="1" height="1"/><rect x="184" y="453" width="1" height="1"/><rect x="186" y="468" width="1" height="1"/><rect x="197" y="427" width="1" height="1"/><rect x="184" y="465" width="1" height="1"/><rect x="193" y="469" width="1" height="1"/><rect x="185" y="422" width="1" height="1"/><rect x="183" y="423" width="1" height="1"/><rect x="190" y="420" width="1" height="1"/><rect x="198" y="451" width="1" height="1"/><rect x="196" y="471" width="1" height="1"/><rect x="190" y="477" width="1" height="1"/><rect x="199" y="435" width="1" height="1"/><rect x="196" y="450" width="1" height="1"/><rect x="195" y="454" width="1" height="1"/><rect x="202" y="450" width="1" height="1"/><rect x="198" y="452" width="1" height="1"/><rect x="198" y="424" width="1" height="1"/><rect x="197" y="426" width="1" height="1"/><rect x="196" y="450" width="1" height="1"/><rect x="196" y="472" width="1" height="1"/><rect x="199" y="434" width="1" height="1"/><rect x="187" y="454" width="1" height="1"/><rect x="195" y="453" width="1" height="1"/><rect x="203" y="465" width="1" height="1"/><rect x="199" y="454" width="1" height="1"/><rect x="204" y="474" width="1" height="1"/><rect x="184" y="434" width="1" height="1"/><rect x="193" y="472" width="1" height="1"/><rect x="217" y="429" width="1" height="1"/><rect x="220" y="422" width="1" height="1"/><rect x="214" y="416" width="1" height="1"/><rect x="221" y="449" width="1" height="1"/><rect x="207" y="416" width="1" height="1"/><rect x="206" y="459" width="1" height="1"/><rect x="205" y="451" width="1" height="1"/><rect x="221" y="451" width="1" height="1"/><rect x="210" y="430" width="1" height="1"/><rect x="217" y="460" width="1" height="1"/><rect x="214" y="461" width="1" height="1"/><rect x="223" y="422" width="1" height="1"/><rect x="216" y="439" width="1" height="1"/><rect x="228" y="450" width="1" height="1"/><rect x="224" y="422" width="1" height="1"/><rect x="212" y="441" width="1" height="1"/><rect x="225" y="450" width="1" height="1"/><rect x="211" y="452" width="1" height="1"/><rect x="215" y="397" width="1" height="1"/><rect x="211" y="460" width="1" height="1"/><rect x="216" y="448" width="1" height="1"/><rect x="220" y="451" width="1" height="1"/><rect x="225" y="469" width="1" height="1"/><rect x="226" y="423" width="1" height="1"/><rect x="224" y="410" width="1" height="1"/><rect x="227" y="431" width="1" height="1"/><rect x="207" y="467" width="1" height="1"/><rect x="223" y="451" width="1" height="1"/><rect x="226" y="423" width="1" height="1"/><rect x="226" y="434" width="1" height="1"/><rect x="221" y="418" width="1" height="1"/><rect x="225" y="460" width="1" height="1"/><rect x="217" y="428" width="1" height="1"/><rect x="226" y="438" width="1" height="1"/><rect x="210" y="466" width="1" height="1"/><rect x="206" y="447" width="1" height="1"/><rect x="216" y="443" width="1" height="1"/><rect x="225" y="472" width="1" height="1"/><rect x="216" y="439" width="1" height="1"/><rect x="225" y="449" width="1" height="1"/><rect x="228" y="467" width="1" height="1"/><rect x="220" y="471" width="1" height="1"/><rect x="221" y="415" width="1" height="1"/><rect x="228" y="440" width="1" height="1"/><rect x="226" y="470" width="1" height="1"/><rect x="220" y="452" width="1" height="1"/><rect x="213" y="445" width="1" height="1"/><rect x="223" y="459" width="1" height="1"/><rect x="215" y="440" width="1" height="1"/><rect x="212" y="424" width="1" height="1"/><rect x="217" y="457" width="1" height="1"/><rect x="228" y="431" width="1" height="1"/><rect x="212" y="455" width="1" height="1"/><rect x="219" y="434" width="1" height="1"/><rect x="205" y="432" width="1" height="1"/><rect x="218" y="470" width="1" height="1"/><rect x="205" y="464" width="1" height="1"/><rect x="219" y="433" width="1" height="1"/><rect x="226" y="434" width="1" height="1"/><rect x="220" y="430" width="1" height="1"/><rect x="245" y="455" width="1" height="1"/><rect x="239" y="421" width="1" height="1"/><rect x="233" y="468" width="1" height="1"/><rect x="250" y="426" width="1" height="1"/><rect x="248" y="418" width="1" height="1"/><rect x="235" y="451" width="1" height="1"/><rect x="236" y="443" width="1" height="1"/><rect x="251" y="464" width="1" height="1"/><rect x="229" y="464" width="1" height="1"/><rect x="242" y="411" width="1" height="1"/><rect x="229" y="447" width="1" height="1"/><rect x="251" y="405" width="1" height="1"/><rect x="238" y="463" width="1" height="1"/><rect x="234" y="408" width="1" height="1"/><rect x="245" y="461" width="1" height="1"/><rect x="231" y="417" width="1" height="1"/><rect x="229" y="427" width="1" height="1"/><rect x="246" y="456" width="1" height="1"/><rect x="247" y="423" width="1" height="1"/><rect x="246" y="463" width="1" height="1"/><rect x="246" y="439" width="1" height="1"/><rect x="235" y="410" width="1" height="1"/><rect x="229" y="471" width="1" height="1"/><rect x="248" y="463" width="1" height="1"/><rect x="246" y="458" width="1" height="1"/><rect x="240" y="466" width="1" height="1"/><rect x="242" y="441" width="1" height="1"/><rect x="232" y="421" width="1" height="1"/><rect x="244" y="429" width="1" height="1"/><rect x="238" y="420" width="1" height="1"/><rect x="247" y="432" width="1" height="1"/><rect x="230" y="410" width="1" height="1"/><rect x="248" y="447" width="1" height="1"/><rect x="252" y="414" width="1" height="1"/><rect x="236" y="443" width="1" height="1"/><rect x="238" y="427" width="1" height="1"/><rect x="250" y="416" width="1" height="1"/><rect x="229" y="455" width="1" height="1"/><rect x="243" y="417" width="1" height="1"/><rect x="230" y="419" width="1" height="1"/><rect x="249" y="431" width="1" height="1"/><rect x="249" y="416" width="1" height="1"/><rect x="250" y="445" width="1" height="1"/><rect x="242" y="419" width="1" height="1"/><rect x="247" y="409" width="1" height="1"/><rect x="243" y="426" width="1" height="1"/><rect x="233" y="455" width="1" height="1"/><rect x="247" y="439" width="1" height="1"/><rect x="248" y="419" width="1" height="1"/><rect x="242" y="412" width="1" height="1"/><rect x="241" y="439" width="1" height="1"/><rect x="233" y="459" width="1" height="1"/><rect x="245" y="445" width="1" height="1"/><rect x="238" y="437" width="1" height="1"/><rect x="230" y="409" width="1" height="1"/><rect x="231" y="432" width="1" height="1"/><rect x="256" y="428" width="1" height="1"/><rect x="265" y="463" width="1" height="1"/><rect x="276" y="407" width="1" height="1"/><rect x="266" y="447" width="1" height="1"/><rect x="263" y="405" width="1" height="1"/><rect x="272" y="402" width="1" height="1"/><rect x="253" y="454" width="1" height="1"/><rect x="255" y="463" width="1" height="1"/><rect x="273" y="433" width="1" height="1"/><rect x="274" y="458" width="1" height="1"/><rect x="262" y="457" width="1" height="1"/><rect x="259" y="430" width="1" height="1"/><rect x="275" y="420" width="1" height="1"/><rect x="263" y="454" width="1" height="1"/><rect x="276" y="447" width="1" height="1"/><rect x="259" y="443" width="1" height="1"/><rect x="274" y="410" width="1" height="1"/><rect x="271" y="418" width="1" height="1"/><rect x="276" y="458" width="1" height="1"/><rect x="271" y="404" width="1" height="1"/><rect x="260" y="428" width="1" height="1"/><rect x="255" y="446" width="1" height="1"/><rect x="255" y="436" width="1" height="1"/><rect x="258" y="456" width="1" height="1"/><rect x="253" y="421" width="1" height="1"/><rect x="253" y="407" width="1" height="1"/><rect x="275" y="408" width="1" height="1"/><rect x="256" y="438" width="1" height="1"/><rect x="275" y="409" width="1" height="1"/><rect x="263" y="443" width="1" height="1"/><rect x="264" y="425" width="1" height="1"/><rect x="258" y="462" width="1" height="1"/><rect x="266" y="455" width="1" height="1"/><rect x="259" y="439" width="1" height="1"/><rect x="259" y="412" width="1" height="1"/><rect x="257" y="435" width="1" height="1"/><rect x="274" y="454" width="1" height="1"/><rect x="254" y="409" width="1" height="1"/><rect x="258" y="435" width="1" height="1"/><rect x="259" y="453" width="1" height="1"/><rect x="276" y="399" width="1" height="1"/><rect x="255" y="448" width="1" height="1"/><rect x="254" y="420" width="1" height="1"/><rect x="276" y="460" width="1" height="1"/><rect x="261" y="383" width="1" height="1"/><rect x="265" y="452" width="1" height="1"/><rect x="298" y="442" width="1" height="1"/><rect x="280" y="449" width="1" height="1"/><rect x="294" y="445" width="1" height="1"/><rect x="279" y="423" width="1" height="1"/><rect x="283" y="447" width="1" height="1"/><rect x="293" y="408" width="1" height="1"/><rect x="281" y="456" width="1" height="1"/><rect x="286" y="414" width="1" height="1"/><rect x="296" y="436" width="1" height="1"/><rect x="297" y="376" width="1" height="1"/><rect x="288" y="405" width="1" height="1"/><rect x="281" y="409" width="1" height="1"/><rect x="280" y="437" width="1" height="1"/><rect x="277" y="429" width="1" height="1"/><rect x="289" y="451" width="1" height="1"/><rect x="296" y="404" width="1" height="1"/><rect x="294" y="434" width="1" height="1"/><rect x="278" y="407" width="1" height="1"/><rect x="288" y="427" width="1" height="1"/><rect x="289" y="457" width="1" height="1"/><rect x="282" y="448" width="1" height="1"/><rect x="283" y="409" width="1" height="1"/><rect x="279" y="417" width="1" height="1"/><rect x="277" y="424" width="1" height="1"/><rect x="289" y="415" width="1" height="1"/><rect x="297" y="413" width="1" height="1"/><rect x="279" y="430" width="1" height="1"/><rect x="283" y="452" width="1" height="1"/><rect x="280" y="424" width="1" height="1"/><rect x="280" y="425" width="1" height="1"/><rect x="280" y="409" width="1" height="1"/><rect x="286" y="433" width="1" height="1"/><rect x="289" y="434" width="1" height="1"/><rect x="295" y="436" width="1" height="1"/><rect x="285" y="432" width="1" height="1"/><rect x="296" y="401" width="1" height="1"/><rect x="297" y="453" width="1" height="1"/><rect x="299" y="399" width="1" height="1"/><rect x="287" y="420" width="1" height="1"/><rect x="289" y="454" width="1" height="1"/><rect x="289" y="457" width="1" height="1"/><rect x="300" y="409" width="1" height="1"/><rect x="316" y="402" width="1" height="1"/><rect x="322" y="447" width="1" height="1"/><rect x="307" y="412" width="1" height="1"/><rect x="314" y="395" width="1" height="1"/><rect x="307" y="422" width="1" height="1"/><rect x="323" y="431" width="1" height="1"/><rect x="316" y="443" width="1" height="1"/><rect x="323" y="417" width="1" height="1"/><rect x="312" y="420" width="1" height="1"/><rect x="303" y="446" width="1" height="1"/><rect x="310" y="435" width="1" height="1"/><rect x="303" y="422" width="1" height="1"/><rect x="315" y="416" width="1" height="1"/><rect x="305" y="411" width="1" height="1"/><rect x="314" y="414" width="1" height="1"/><rect x="308" y="438" width="1" height="1"/><rect x="313" y="428" width="1" height="1"/><rect x="301" y="434" width="1" height="1"/><rect x="306" y="420" width="1" height="1"/><rect x="307" y="394" width="1" height="1"/><rect x="319" y="440" width="1" height="1"/><rect x="321" y="422" width="1" height="1"/><rect x="310" y="426" width="1" height="1"/><rect x="303" y="441" width="1" height="1"/><rect x="318" y="441" width="1" height="1"/><rect x="309" y="412" width="1" height="1"/><rect x="321" y="399" width="1" height="1"/><rect x="318" y="405" width="1" height="1"/><rect x="312" y="404" width="1" height="1"/><rect x="322" y="441" width="1" height="1"/><rect x="301" y="409" width="1" height="1"/><rect x="312" y="393" width="1" height="1"/><rect x="311" y="405" width="1" height="1"/><rect x="315" y="428" width="1" height="1"/><rect x="311" y="408" width="1" height="1"/><rect x="310" y="419" width="1" height="1"/><rect x="308" y="405" width="1" height="1"/><rect x="312" y="425" width="1" height="1"/><rect x="308" y="444" width="1" height="1"/><rect x="314" y="446" width="1" height="1"/><rect x="308" y="402" width="1" height="1"/><rect x="324" y="436" width="1" height="1"/><rect x="346" y="441" width="1" height="1"/><rect x="338" y="414" width="1" height="1"/><rect x="343" y="410" width="1" height="1"/><rect x="337" y="413" width="1" height="1"/><rect x="334" y="423" width="1" height="1"/><rect x="333" y="388" width="1" height="1"/><rect x="337" y="438" width="1" height="1"/><rect x="334" y="411" width="1" height="1"/><rect x="346" y="382" width="1" height="1"/><rect x="335" y="407" width="1" height="1"/><rect x="333" y="413" width="1" height="1"/><rect x="329" y="427" width="1" height="1"/><rect x="344" y="411" width="1" height="1"/><rect x="346" y="399" width="1" height="1"/><rect x="348" y="386" width="1" height="1"/><rect x="328" y="429" width="1" height="1"/><rect x="337" y="433" width="1" height="1"/><rect x="340" y="407" width="1" height="1"/><rect x="348" y="402" width="1" height="1"/><rect x="334" y="397" width="1" height="1"/><rect x="341" y="443" width="1" height="1"/><rect x="345" y="406" width="1" height="1"/><rect x="329" y="416" width="1" height="1"/><rect x="331" y="407" width="1" height="1"/><rect x="348" y="406" width="1" height="1"/><rect x="327" y="438" width="1" height="1"/><rect x="327" y="441" width="1" height="1"/><rect x="337" y="394" width="1" height="1"/><rect x="344" y="364" width="1" height="1"/><rect x="332" y="402" width="1" height="1"/><rect x="329" y="431" width="1" height="1"/><rect x="346" y="406" width="1" height="1"/><rect x="335" y="421" width="1" height="1"/><rect x="346" y="406" width="1" height="1"/><rect x="335" y="407" width="1" height="1"/><rect x="326" y="391" width="1" height="1"/><rect x="332" y="391" width="1" height="1"/><rect x="332" y="409" width="1" height="1"/><rect x="336" y="386" width="1" height="1"/><rect x="334" y="401" width="1" height="1"/><rect x="332" y="392" width="1" height="1"/><rect x="344" y="428" width="1" height="1"/><rect x="357" y="427" width="1" height="1"/><rect x="355" y="404" width="1" height="1"/><rect x="361" y="413" width="1" height="1"/><rect x="350" y="433" width="1" height="1"/><rect x="357" y="424" width="1" height="1"/><rect x="355" y="424" width="1" height="1"/><rect x="364" y="415" width="1" height="1"/><rect x="365" y="431" width="1" height="1"/><rect x="369" y="427" width="1" height="1"/><rect x="369" y="385" width="1" height="1"/><rect x="357" y="394" width="1" height="1"/><rect x="372" y="422" width="1" height="1"/><rect x="361" y="424" width="1" height="1"/><rect x="352" y="396" width="1" height="1"/><rect x="370" y="398" width="1" height="1"/><rect x="354" y="402" width="1" height="1"/><rect x="369" y="427" width="1" height="1"/><rect x="362" y="421" width="1" height="1"/><rect x="358" y="398" width="1" height="1"/><rect x="356" y="415" width="1" height="1"/><rect x="353" y="387" width="1" height="1"/><rect x="364" y="430" width="1" height="1"/><rect x="357" y="408" width="1" height="1"/><rect x="350" y="421" width="1" height="1"/><rect x="352" y="396" width="1" height="1"/><rect x="358" y="382" width="1" height="1"/><rect x="370" y="381" width="1" height="1"/><rect x="355" y="437" width="1" height="1"/><rect x="364" y="415" width="1" height="1"/><rect x="364" y="393" width="1" height="1"/><rect x="369" y="413" width="1" height="1"/><rect x="353" y="433" width="1" height="1"/><rect x="366" y="392" width="1" height="1"/><rect x="349" y="431" width="1" height="1"/><rect x="356" y="415" width="1" height="1"/><rect x="356" y="399" width="1" height="1"/><rect x="369" y="400" width="1" height="1"/><rect x="355" y="412" width="1" height="1"/><rect x="357" y="439" width="1" height="1"/><rect x="367" y="418" width="1" height="1"/><rect x="393" y="390" width="1" height="1"/><rect x="378" y="426" width="1" height="1"/><rect x="378" y="375" width="1" height="1"/><rect x="375" y="390" width="1" height="1"/><rect x="390" y="376" width="1" height="1"/><rect x="375" y="374" width="1" height="1"/><rect x="395" y="384" width="1" height="1"/><rect x="392" y="389" width="1" height="1"/><rect x="374" y="390" width="1" height="1"/><rect x="385" y="372" width="1" height="1"/><rect x="391" y="426" width="1" height="1"/><rect x="392" y="412" width="1" height="1"/><rect x="396" y="387" width="1" height="1"/><rect x="378" y="429" width="1" height="1"/><rect x="382" y="419" width="1" height="1"/><rect x="376" y="389" width="1" height="1"/><rect x="378" y="417" width="1" height="1"/><rect x="383" y="372" width="1" height="1"/><rect x="380" y="376" width="1" height="1"/><rect x="386" y="409" width="1" height="1"/><rect x="386" y="382" width="1" height="1"/><rect x="388" y="392" width="1" height="1"/><rect x="391" y="376" width="1" height="1"/><rect x="379" y="410" width="1" height="1"/><rect x="374" y="416" width="1" height="1"/><rect x="389" y="401" width="1" height="1"/><rect x="380" y="402" width="1" height="1"/><rect x="377" y="348" width="1" height="1"/><rect x="391" y="424" width="1" height="1"/><rect x="396" y="392" width="1" height="1"/><rect x="384" y="403" width="1" height="1"/><rect x="386" y="430" width="1" height="1"/><rect x="388" y="390" width="1" height="1"/><rect x="388" y="414" width="1" height="1"/><rect x="400" y="425" width="1" height="1"/><rect x="417" y="405" width="1" height="1"/><rect x="412" y="371" width="1" height="1"/><rect x="401" y="376" width="1" height="1"/><rect x="414" y="404" width="1" height="1"/><rect x="416" y="404" width="1" height="1"/><rect x="410" y="401" width="1" height="1"/><rect x="402" y="423" width="1" height="1"/><rect x="412" y="372" width="1" height="1"/><rect x="418" y="364" width="1" height="1"/><rect x="408" y="415" width="1" height="1"/><rect x="410" y="420" width="1" height="1"/><rect x="400" y="398" width="1" height="1"/><rect x="399" y="424" width="1" height="1"/><rect x="401" y="344" width="1" height="1"/><rect x="417" y="374" width="1" height="1"/><rect x="403" y="383" width="1" height="1"/><rect x="407" y="404" width="1" height="1"/><rect x="412" y="372" width="1" height="1"/><rect x="400" y="407" width="1" height="1"/><rect x="410" y="403" width="1" height="1"/><rect x="399" y="406" width="1" height="1"/><rect x="420" y="366" width="1" height="1"/><rect x="420" y="362" width="1" height="1"/><rect x="440" y="418" width="1" height="1"/><rect x="435" y="404" width="1" height="1"/><rect x="443" y="391" width="1" height="1"/><rect x="428" y="401" width="1" height="1"/><rect x="421" y="412" width="1" height="1"/><rect x="431" y="418" width="1" height="1"/><rect x="429" y="386" width="1" height="1"/><rect x="433" y="387" width="1" height="1"/><rect x="423" y="412" width="1" height="1"/><rect x="434" y="416" width="1" height="1"/><rect x="427" y="417" width="1" height="1"/><rect x="427" y="392" width="1" height="1"/><rect x="426" y="387" width="1" height="1"/><rect x="433" y="385" width="1" height="1"/><rect x="430" y="418" width="1" height="1"/><rect x="441" y="387" width="1" height="1"/><rect x="439" y="415" width="1" height="1"/><rect x="438" y="416" width="1" height="1"/><rect x="430" y="412" width="1" height="1"/><rect x="434" y="373" width="1" height="1"/><rect x="463" y="416" width="1" height="1"/><rect x="453" y="420" width="1" height="1"/><rect x="450" y="402" width="1" height="1"/><rect x="455" y="363" width="1" height="1"/><rect x="465" y="383" width="1" height="1"/><rect x="465" y="409" width="1" height="1"/><rect x="453" y="372" width="1" height="1"/><rect x="464" y="412" width="1" height="1"/><rect x="462" y="359" width="1" height="1"/><rect x="446" y="383" width="1" height="1"/><rect x="458" y="369" width="1" height="1"/><rect x="467" y="376" width="1" height="1"/><rect x="449" y="392" width="1" height="1"/><rect x="458" y="353" width="1" height="1"/><rect x="488" y="405" width="1" height="1"/><rect x="475" y="374" width="1" height="1"/><rect x="472" y="362" width="1" height="1"/><rect x="485" y="365" width="1" height="1"/><rect x="469" y="397" width="1" height="1"/><rect x="481" y="362" width="1" height="1"/><rect x="469" y="407" width="1" height="1"/><rect x="485" y="392" width="1" height="1"/><rect x="472" y="364" width="1" height="1"/><rect x="489" y="378" width="1" height="1"/><rect x="500" y="402" width="1" height="1"/><rect x="507" y="413" width="1" height="1"/><rect x="501" y="386" width="1" height="1"/><rect x="502" y="338" width="1" height="1"/><rect x="501" y="415" width="1" height="1"/><rect x="516" y="412" width="1" height="1"/><rect x="509" y="398" width="1" height="1"/><rect x="505" y="399" width="1" height="1"/><rect x="505" y="353" width="1" height="1"/><rect x="517" y="378" width="1" height="1"/><rect x="537" y="362" width="1" height="1"/><rect x="532" y="389" width="1" height="1"/><rect x="536" y="356" width="1" height="1"/><rect x="533" y="393" width="1" height="1"/><rect x="395" y="342" width="1" height="1"/><rect x="339" y="346" width="1" height="1"/><rect x="295" y="354" width="1" height="1"/><rect x="77" y="363" width="1" height="1"/><rect x="184" y="405" width="1" height="1"/><rect x="260" y="354" width="1" height="1"/><rect x="149" y="353" width="1" height="1"/><rect x="196" y="344" width="1" height="1"/><rect x="62" y="407" width="1" height="1"/><rect x="246" y="359" width="1" height="1"/><rect x="304" y="348" width="1" height="1"/><rect x="117" y="340" width="1" height="1"/><rect x="174" y="358" width="1" height="1"/><rect x="388" y="344" width="1" height="1"/><rect x="505" y="335" width="1" height="1"/><rect x="495" y="336" width="1" height="1"/><rect x="84" y="350" width="1" height="1"/><rect x="310" y="376" width="1" height="1"/><rect x="200" y="387" width="1" height="1"/><rect x="234" y="385" width="1" height="1"/><rect x="79" y="375" width="1" height="1"/><rect x="483" y="336" width="1" height="1"/><rect x="155" y="337" width="1" height="1"/><rect x="116" y="357" width="1" height="1"/><rect x="376" y="339" width="1" height="1"/><rect x="220" y="347" width="1" height="1"/><rect x="322" y="547" width="1" height="1"/><rect x="328" y="547" width="1" height="1"/><rect x="365" y="547" width="1" height="1"/><rect x="232" y="547" width="1" height="1"/><rect x="372" y="463" width="1" height="1"/><rect x="379" y="477" width="1" height="1"/><rect x="342" y="464" width="1" height="1"/><rect x="540" y="341" width="1" height="1"/><rect x="160" y="405" width="1" height="1"/><rect x="165" y="408" width="1" height="1"/></g>
<polyline points="60.2,261.2 61.5,262.0 62.4,263.3 64.5,254.7 65.7,256.4 67.4,255.2 68.4,256.4 74.5,241.4 75.7,247.4 77.0,254.3 79.1,258.6 80.9,255.7 82.6,258.1 84.7,256.0 86.0,258.6 87.4,256.9 89.0,259.1 92.0,248.3 96.4,240.5 98.1,249.1 99.8,255.2 101.9,257.2 103.3,256.4 108.4,256.4 110.2,255.2 111.6,261.2 113.3,267.8 115.3,260.3 117.0,262.0 120.5,268.4 122.6,248.3 124.0,257.8 125.7,268.1 127.4,260.3 129.1,261.2 131.7,267.2 134.3,249.1 135.7,258.6 137.8,269.5 139.5,260.3 141.2,262.0 144.3,266.4 146.4,250.9 148.1,262.9 149.8,271.2 151.6,266.4 154.1,271.6 156.4,256.0 158.4,276.7 161.4,253.4 163.6,275.3 166.2,260.3 168.8,269.8 170.9,265.5 174.0,271.2 175.7,269.5 178.8,272.4 181.7,270.2 183.1,266.4 185.2,270.3 187.2,266.4 189.5,275.5 191.7,281.2 194.7,280.7 197.2,272.1 199.8,269.5 201.6,276.4 204.1,283.3 206.7,274.7 209.7,260.9 211.0,274.7 214.5,287.2 217.1,274.7 219.7,260.9 221.4,274.7 224.8,284.7 226.9,276.4 228.6,267.8 230.3,278.1 231.7,281.6 234.8,279.5 241.2,266.9 244.1,269.5 249.0,278.1 252.4,281.9 255.9,282.4 258.4,286.7 260.2,293.3 262.4,283.3 265.3,290.2 268.8,298.8 271.4,300.9 274.0,297.9 277.4,290.2 279.7,279.0 281.4,288.4 285.2,297.1 288.3,300.9 291.2,296.2 296.4,283.3 297.2,293.6 298.6,307.4 300.7,304.3 303.4,304.5 306.6,308.3 308.3,295.5 310.3,312.2 313.4,302.4 315.5,306.2 318.1,306.2 320.7,302.4 322.8,312.2 325.3,291.6 327.6,309.3 330.2,302.8 334.5,309.3 337.6,296.7 339.3,319.1 344.8,327.4 349.1,325.2 354.3,314.8 356.6,305.3 359.5,305.3 361.2,314.8 363.8,320.9 366.4,323.4 369.0,329.5 371.6,324.8 375.5,332.4 379.7,326.0 383.6,310.5 385.3,318.3 388.3,326.6 390.5,327.8 392.8,331.2 395.7,328.6 398.3,339.8 400.5,345.9 404.7,323.4 406.9,337.2 409.8,346.2 412.1,339.0 414.3,324.3 416.4,339.0 419.5,346.2 422.1,338.1 424.3,325.9 426.6,337.1 428.6,345.7 431.2,346.9 433.4,335.3 436.4,342.2 438.6,349.1 441.0,350.3 443.8,337.1 445.9,346.6 448.4,357.8 453.6,363.8 457.1,357.8 460.5,355.2 464.0,345.2 466.9,341.0 468.8,347.4 470.9,360.3 473.4,367.2 478.6,373.3 484.7,367.2 489.3,359.5 492.4,364.7 495.9,375.9 497.9,379.0 501.4,381.4 505.3,378.4 508.4,370.7 510.0,381.0 511.4,389.7 513.4,378.4 515.2,387.9 518.6,390.5 521.7,389.7 524.0,384.5 525.5,377.6 527.2,389.7 528.6,395.7 530.7,398.3 533.8,394.5 537.2,392.2 539.8,391.0" fill="none" stroke="#1fb0ee" stroke-width="1" stroke-linejoin="round" shape-rendering="crispEdges"/>
</svg>
<div class="t" style="left:60px;top:180px;letter-spacing:0.4px">MB/sec</div>
<div class="t" style="left:522px;top:180px;letter-spacing:0.2px">ms</div>
<div class="t" style="left:21px;top:188px;width:35px;text-align:right">150</div>
<div class="t" style="left:21px;top:305px;width:35px;text-align:right">100</div>
<div class="t" style="left:21px;top:422px;width:35px;text-align:right">50</div>
<div class="t" style="left:545px;top:188px">45</div>
<div class="t" style="left:545px;top:305px">30</div>
<div class="t" style="left:545px;top:422px">15</div>
<div class="t" style="left:62.500px;top:197px;color:#b4b4b4;font-size:13px">trial version</div>
<div class="t xl" style="left:39px">0</div>
<div class="t xl" style="left:88px">10</div>
<div class="t xl" style="left:136px">20</div>
<div class="t xl" style="left:184px">30</div>
<div class="t xl" style="left:232px">40</div>
<div class="t xl" style="left:280px">50</div>
<div class="t xl" style="left:328px">60</div>
<div class="t xl" style="left:375px">70</div>
<div class="t xl" style="left:423px">80</div>
<div class="t xl" style="left:471px">90</div>
<div class="t" style="left:522px;top:548px">100%</div>

<div class="btn" style="left:608px;top:173px;width:98px;height:26px;box-shadow:inset 0 0 0 2px #bcd0f5,0 0 0 1px #f0efe6"><div class="t" style="top:5px;letter-spacing:0.3px">Start</div></div>
<div class="radio" style="left:607px;top:210px"><div style="left:3px;top:3px;width:8px;height:8px;border-radius:50%;background:radial-gradient(circle at 35% 35%,#58d858,#21a121)"></div></div>
<div class="t" style="left:625.500px;top:210px;font-size:14px;letter-spacing:0.3px">Read</div>
<div class="radio" style="left:607px;top:230px"></div>
<div class="t" style="left:626px;top:230px;letter-spacing:0.2px">Write</div>
<div id="grp"></div>
<div class="t" style="left:590px;top:254px;padding:0 3px;background:#fbfbf9;color:#0046d5;letter-spacing:0.2px">Transfer rate</div>
<div class="t" style="left:593px;top:277px;letter-spacing:0.2px">Minimum</div>
<div class="box" style="top:298px"><div class="t cy">63.8 MB/sec</div></div>
<div class="t" style="left:593px;top:321px;letter-spacing:0.2px">Maximum</div>
<div class="box" style="top:342px"><div class="t cy">131.1 MB/sec</div></div>
<div class="t" style="left:593px;top:365px;letter-spacing:0.5px">Average:</div>
<div class="box" style="top:386px"><div class="t cy">102.7 MB/sec</div></div>
<div class="t" style="left:593px;top:431px;letter-spacing:0.36px">Access time:</div>
<div class="box" style="top:452px"><div class="t ye">14.1 ms</div></div>
<div class="t" style="left:593px;top:483px">Burst rate</div>
<div class="box" style="top:504px"><div class="t wh">189.3 MB/sec</div></div>
<div class="t" style="left:593px;top:535px;letter-spacing:0.4px">CPU usage</div>
<div class="box" style="top:556px"><div class="t wh">3.8%</div></div>
</body></html>
